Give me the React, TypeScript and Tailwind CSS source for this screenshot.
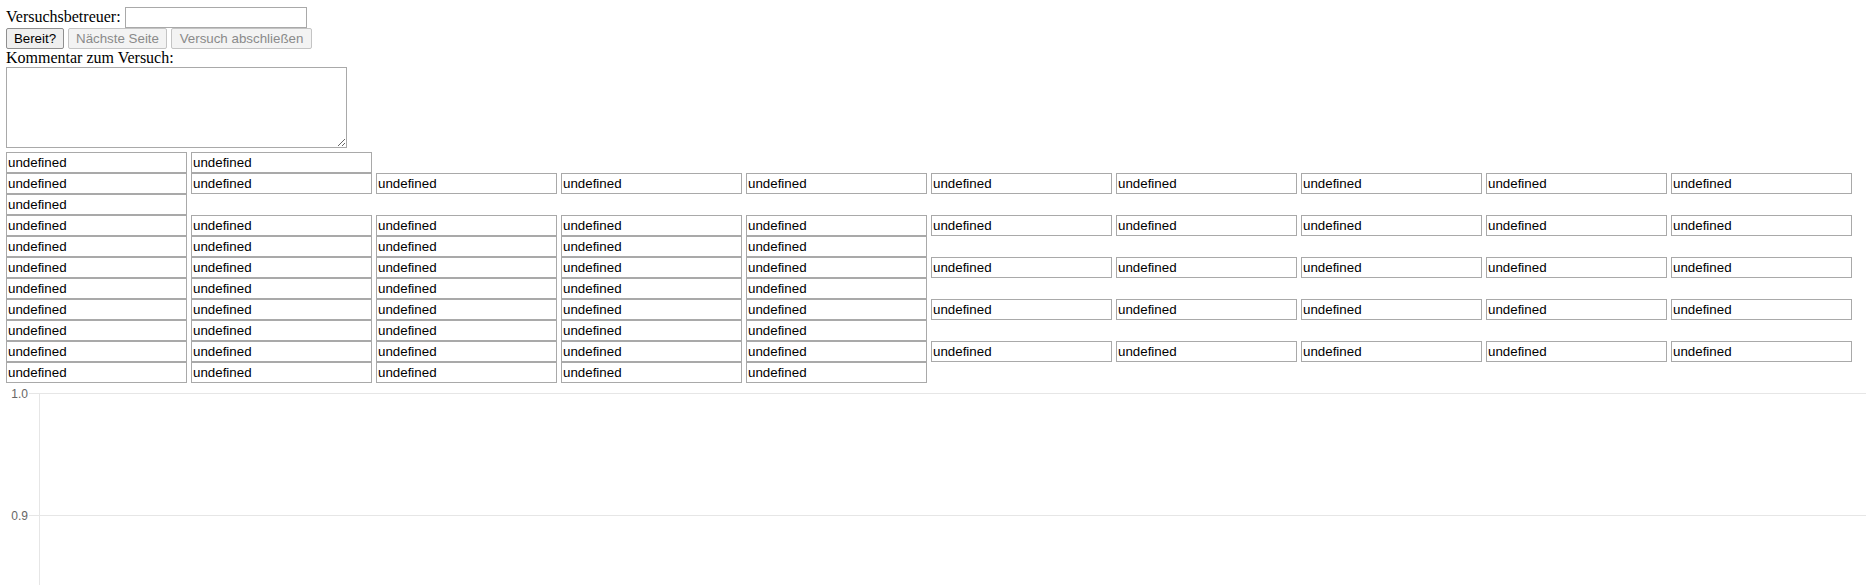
import React from "react";

const rowCounts = [2, 10, 1, 10, 5, 10, 5, 10, 5, 10, 5];

const inputCls =
  "box-border w-[181px] h-[21px] shrink-0 border border-[#a9a9a9] bg-white pl-[1px] pr-[2px] font-['Liberation_Sans',Arial,sans-serif] text-[13.33px] leading-[normal] text-black outline-none";

export default function App() {
  return (
    <div className="w-[1876px] h-[585px] overflow-hidden bg-white px-[6px] font-['Liberation_Serif','Times_New_Roman',serif] text-[16px] leading-[normal] text-black">
      <div className="box-border flex h-[28px] items-baseline gap-[4px] pt-[7px]">
        <span>Versuchsbetreuer:</span>
        <input type="text" className="box-border w-[182px] h-[21px] border border-[#a9a9a9] bg-white px-[2px] font-['Liberation_Sans',Arial,sans-serif] text-[13.33px] text-black outline-none" />
      </div>
      <div className="flex h-[21px] gap-[4px] font-['Liberation_Sans',Arial,sans-serif] text-[13.33px]">
        <button className="box-border h-[21px] w-[58px] rounded-[2px] border border-[#8f8f8f] bg-[#efefef] text-black">
          Bereit?
        </button>
        <button disabled className="box-border h-[21px] w-[99px] rounded-[2px] border border-[#c4c4c4] bg-[#f3f3f3] text-[#8a8a8a]">
          Nächste Seite
        </button>
        <button disabled className="box-border h-[21px] w-[141px] rounded-[2px] border border-[#c4c4c4] bg-[#f3f3f3] text-[#8a8a8a]">
          Versuch abschließen
        </button>
      </div>
      <div className="h-[18px] leading-[18px]">Kommentar zum Versuch:</div>
      <textarea className="box-border block h-[81px] w-[341px] resize border border-[#a9a9a9] bg-white p-[2px] outline-none" />
      <div className="mt-[4px]">
        {rowCounts.map((n, r) => (
          <div key={r} className="flex h-[21px] gap-[4px]">
            {Array.from({ length: n }).map((_, i) => (
              <input key={i} type="text" readOnly defaultValue="undefined" className={inputCls} />
            ))}
          </div>
        ))}
      </div>
      <svg width="1864" height="210" className="block">
        <line x1="23" y1="10.5" x2="1860" y2="10.5" stroke="#e6e6e6" strokeWidth="1" />
        <line x1="23" y1="132.5" x2="1860" y2="132.5" stroke="#e6e6e6" strokeWidth="1" />
        <line x1="33.5" y1="10" x2="33.5" y2="210" stroke="#e6e6e6" strokeWidth="1" />
        <text x="22" y="15" textAnchor="end" fontFamily="'Liberation Sans', Arial, sans-serif" fontSize="12" fill="#666">
          1.0
        </text>
        <text x="22" y="137" textAnchor="end" fontFamily="'Liberation Sans', Arial, sans-serif" fontSize="12" fill="#666">
          0.9
        </text>
      </svg>
    </div>
  );
}
